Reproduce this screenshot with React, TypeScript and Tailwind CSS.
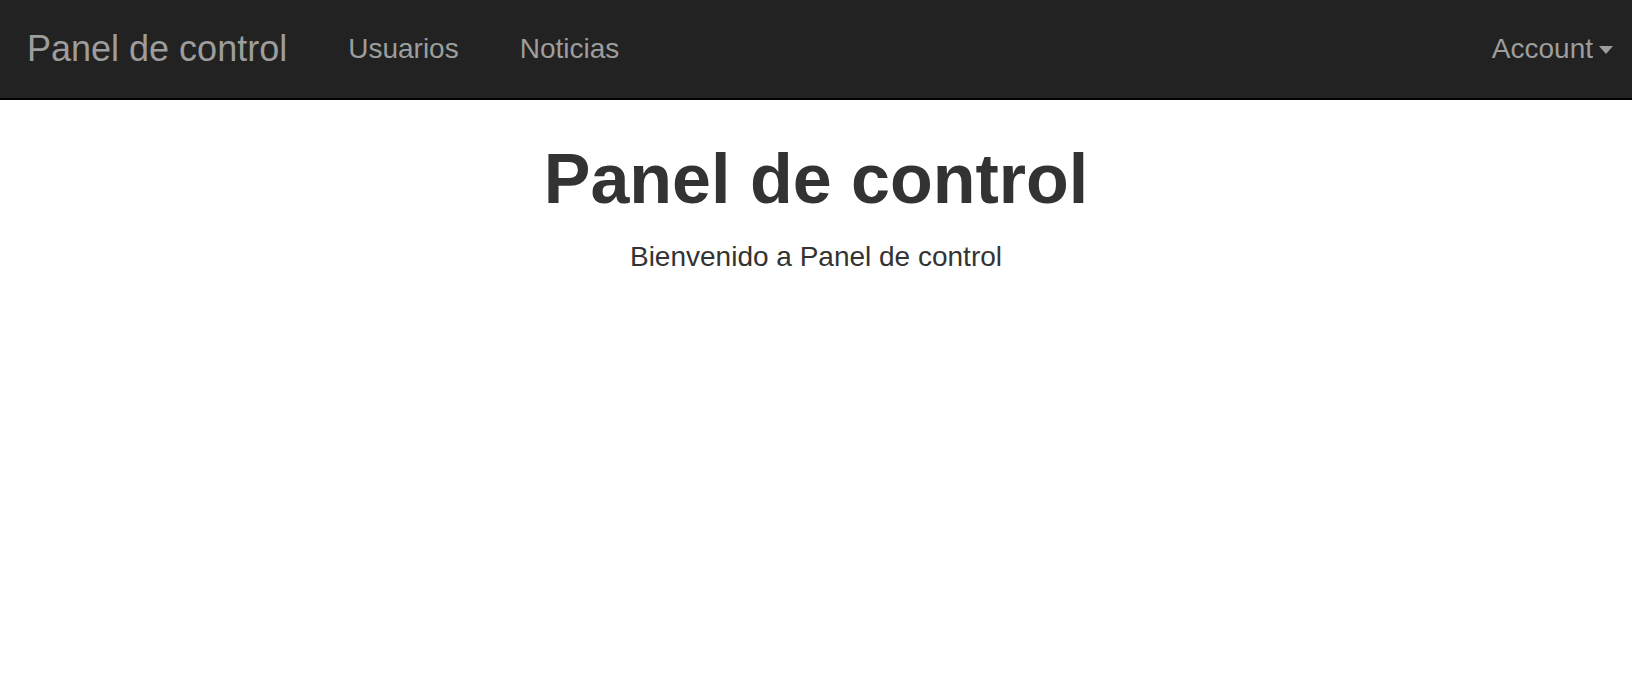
export default function App() {
  const links = ["Usuarios", "Noticias"];

  return (
    <div className="min-h-screen bg-white font-['Liberation_Sans',Arial,sans-serif]">
      {/* Top navbar */}
      <nav className="flex h-[100px] items-center justify-between border-b-2 border-black bg-[#222222] pl-[27px] pr-[19px]">
        <div className="flex items-center">
          <a href="#" className="pr-[61px] text-[36px] text-[#9d9d9d]">
            Panel de control
          </a>
          <div className="flex items-center gap-[61px]">
            {links.map((link) => (
              <a key={link} href="#" className="text-[28px] text-[#9d9d9d]">
                {link}
              </a>
            ))}
          </div>
        </div>
        <a href="#" className="flex items-center gap-[6px] text-[28px] text-[#9d9d9d]">
          Account
          <span className="mt-[2px] h-0 w-0 border-x-[7px] border-t-[8px] border-x-transparent border-t-[#9d9d9d]" />
        </a>
      </nav>

      {/* Main content */}
      <main className="flex flex-col items-center pt-[41px] text-[#333333]">
        <h1 className="text-[70px] leading-[1.1] font-bold">Panel de control</h1>
        <p className="mt-[18px] text-[28px]">Bienvenido a Panel de control</p>
      </main>
    </div>
  );
}
